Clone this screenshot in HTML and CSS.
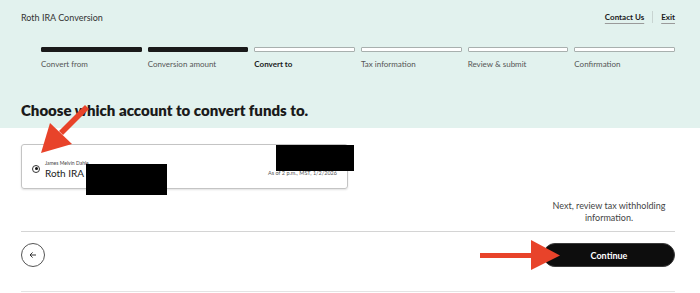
FILE: index.html
```html
<!DOCTYPE html>
<html lang="en">
<head>
    <meta charset="UTF-8">
    <meta name="viewport" content="width=device-width, initial-scale=1.0">
    <title>Roth IRA Conversion</title>
    <link rel="stylesheet" href="styles.css">
</head>
<body>
    <div class="header">
        <div class="topbar">
            <span class="app-title">Roth IRA Conversion</span>
            <div class="top-links">
                <a href="#">Contact Us</a>
                <span class="sep"></span>
                <a href="#">Exit</a>
            </div>
        </div>

        <div class="steps">
            <div class="step done"><div class="bar"></div><span>Convert from</span></div>
            <div class="step done"><div class="bar"></div><span>Conversion amount</span></div>
            <div class="step current"><div class="bar"></div><span>Convert to</span></div>
            <div class="step"><div class="bar"></div><span>Tax information</span></div>
            <div class="step"><div class="bar"></div><span>Review &amp; submit</span></div>
            <div class="step"><div class="bar"></div><span>Confirmation</span></div>
        </div>

        <h1>Choose which account to convert funds to.</h1>
    </div>

    <div class="main">
        <div class="account-card">
            <span class="radio"><span class="dot"></span></span>
            <div class="account-info">
                <div class="owner">James Melvin Dahle</div>
                <div class="account-name">Roth IRA -</div>
            </div>
            <div class="as-of">As of 2 p.m., MST, 1/2/2026</div>
        </div>

        <div class="next-col">Next, review tax withholding information.</div>

        <div class="actions">
            <button class="btn-back" aria-label="Back">
                <svg width="8" height="8" viewBox="0 0 8 8"><path d="M7 4H1.2M3.6 1.4L1 4l2.6 2.6" fill="none" stroke="#222" stroke-width="0.9"/></svg>
            </button>
            <button class="btn-continue">Continue</button>
        </div>
    </div>

    <!-- redactions + annotation arrows -->
    <div class="redact r1"></div>
    <div class="redact r2"></div>
    <svg class="arrows" width="700" height="293" viewBox="0 0 700 293">
        <path d="M85 105 L89 109 L63 135 L59 131 Z" fill="#e8432a"/>
        <path d="M41 153 L50 123 L72 144 Z" fill="#e8432a"/>
        <rect x="480" y="253" width="53" height="5" fill="#e8432a"/>
        <path d="M531 240 L560 255.5 L531 270 Z" fill="#e8432a"/>
    </svg>
</body>
</html>
```

FILE: styles.css
```css
body {
    margin: 0;
    font-family: "Lato", "Noto Sans", sans-serif;
    color: #1a1a1a;
    background: #fff;
    width: 700px;
    height: 293px;
    overflow: hidden;
    position: relative;
}
.header {
    background: #e2f2ee;
    padding: 0 25px 8px 21px;
}
.topbar {
    height: 34px;
    display: flex;
    align-items: center;
    justify-content: space-between;
}
.app-title {
    font-size: 9px;
    color: #333;
}
.top-links {
    display: flex;
    align-items: center;
    gap: 8px;
}
.top-links a {
    font-size: 8px;
    font-weight: 700;
    color: #1a1a1a;
    text-decoration: underline;
    text-decoration-color: #9a9a9a;
    text-underline-offset: 3px;
}
.sep {
    width: 1px;
    height: 12px;
    background: #c8d4d1;
}
.steps {
    margin: 13px 0 0 20px;
    display: flex;
    gap: 6px;
}
.step {
    flex: 1;
    font-size: 8px;
    color: #555;
}
.bar {
    height: 3px;
    border: 1px solid #a8b0ae;
    background: #fff;
    border-radius: 1px;
    margin-bottom: 7px;
}
.step.done .bar {
    background: #1a1a1a;
    border-color: #1a1a1a;
}
.step.current {
    font-weight: 700;
    color: #1a1a1a;
}
h1 {
    margin: 31px 0 0;
    font-size: 15px;
    line-height: 20px;
    font-weight: 800;
}
.main {
    padding: 16px 25px 0 21px;
}
.account-card {
    width: 325px;
    height: 43px;
    border: 1px solid #c4c4c4;
    border-radius: 3px;
    box-shadow: 0 1px 2px rgba(0,0,0,0.12);
    display: flex;
    align-items: center;
    position: relative;
}
.radio {
    width: 6px;
    height: 6px;
    border: 1px solid #333;
    border-radius: 50%;
    margin: 4px 0 0 10px;
    display: flex;
    align-items: center;
    justify-content: center;
}
.dot {
    width: 3px;
    height: 3px;
    background: #111;
    border-radius: 50%;
}
.account-info {
    margin-left: 5px;
    padding-top: 5px;
}
.owner {
    font-size: 5px;
    color: #444;
}
.account-name {
    font-size: 10px;
    color: #222;
    margin-top: 1px;
}
.as-of {
    position: absolute;
    right: 10px;
    top: 25px;
    font-size: 5.5px;
    color: #555;
}
.next-col {
    width: 132px;
    margin: 11px 0 0 auto;
    text-align: center;
    font-size: 9px;
    line-height: 12px;
    color: #444;
}
.actions {
    margin-top: 7px;
    border-top: 1px solid #d4d4d4;
    border-bottom: 1px solid #e4e4e4;
    padding: 11px 0 24px;
    display: flex;
    justify-content: space-between;
    align-items: center;
}
button {
    font-family: inherit;
    cursor: pointer;
    padding: 0;
}
.btn-back {
    width: 24px;
    height: 24px;
    border: 1px solid #555;
    border-radius: 50%;
    background: #fff;
    display: flex;
    align-items: center;
    justify-content: center;
}
.btn-continue {
    width: 132px;
    height: 24px;
    border: 1px solid #3a3a3a;
    border-radius: 12px;
    background: #0d0d0d;
    color: #fff;
    font-size: 9px;
    font-weight: 700;
}
.redact {
    position: absolute;
    background: #000;
}
.r1 { left: 86px; top: 164px; width: 81px; height: 31px; }
.r2 { left: 276px; top: 145px; width: 78px; height: 26px; }
.arrows {
    position: absolute;
    left: 0;
    top: 0;
    pointer-events: none;
}
```
